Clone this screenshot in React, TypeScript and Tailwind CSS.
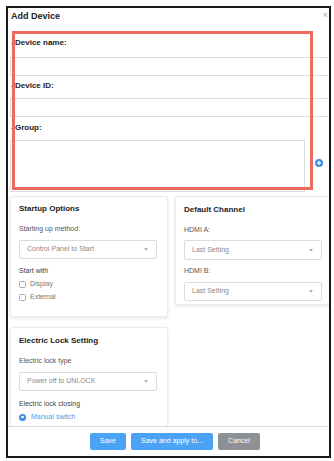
import React from "react";

const font = { fontFamily: '"Liberation Sans", Arial, sans-serif' };

function Select({ text, h = "h-[19px]", mt }: { text: string; h?: string; mt: string }) {
  return (
    <div className={`${mt} ${h} w-[138px] border border-[#dcdcdc] rounded-[2px] flex items-center justify-between pl-[7px] pr-[8px] shrink-0`}>
      <span className="text-[7px] text-[#8a8a8a]">{text}</span>
      <span className="w-0 h-0 border-l-[2.5px] border-r-[2.5px] border-t-[3px] border-l-transparent border-r-transparent border-t-[#b5b5b5]" />
    </div>
  );
}

function Label({ text, mt, bold = false }: { text: string; mt: string; bold?: boolean }) {
  return (
    <div
      className={`${mt} h-[10px] leading-[10px] shrink-0 ${
        bold ? "text-[8px] font-bold text-[#222]" : "text-[7px] text-[#555]"
      }`}
    >
      {text}
    </div>
  );
}

function FieldLabel({ text, mt }: { text: string; mt: string }) {
  return (
    <div className={`${mt} h-[12px] flex items-center pl-[3px] shrink-0`}>
      <span className="w-[2px] h-[1px] bg-[#999]" />
      <span className="ml-[2px] text-[8px] font-bold text-[#222] leading-[12px]">{text}</span>
    </div>
  );
}

export default function App() {
  return (
    <div className="bg-white w-[334px] h-[461px] pt-[6px] pl-[6px]" style={font}>
      <div className="relative w-[325px] h-[452px] border-2 border-[#1a1a1a] flex flex-col overflow-hidden bg-white">
        {/* header */}
        <div className="h-[17px] shrink-0 flex items-center pl-[3px]">
          <span className="text-[9px] font-bold text-[#222]">Add Device</span>
        </div>
        <span className="absolute right-[1px] top-[2px] text-[9px] text-[#aaa] leading-[10px]">×</span>

        {/* body */}
        <div className="flex-1 overflow-hidden flex flex-col">
          <FieldLabel text="Device name:" mt="mt-[12px]" />
          <div className="mt-[8px] h-[19px] ml-[2px] -mr-[3px] border border-[#dedede] shrink-0" />
          <FieldLabel text="Device ID:" mt="mt-[4px]" />
          <div className="mt-[6px] h-[19px] ml-[2px] -mr-[3px] border border-[#dedede] shrink-0" />
          <FieldLabel text="Group:" mt="mt-[5px]" />
          <div className="mt-[6px] flex items-center ml-[2px] shrink-0">
            <div className="w-[295px] h-[52px] border border-[#dedede]" />
            <svg className="ml-[10px] -mt-[6px]" width="8" height="8" viewBox="0 0 8 8">
              <circle cx="4" cy="4" r="4" fill="#3d8fe0" />
              <rect x="1.8" y="3.4" width="4.4" height="1.2" fill="#fff" />
              <rect x="3.4" y="1.8" width="1.2" height="4.4" fill="#fff" />
            </svg>
          </div>

          {/* cards */}
          <div className="mt-[4px] ml-[2px] grid grid-cols-[158px_158px] gap-x-[7px] items-start shrink-0">
            <div className="flex flex-col gap-[10px]">
              <div className="h-[121px] border border-[#ececec] rounded-[2px] shadow-[0_1px_3px_rgba(0,0,0,0.12)] pl-[8px] pt-[7px] flex flex-col">
                <Label text="Startup Options" mt="" bold />
                <Label text="Starting up method:" mt="mt-[10px]" />
                <Select text="Control Panel to Start" mt="mt-[6px]" />
                <div className="mt-[7px] h-[10px] leading-[10px] text-[7px] text-[#444] shrink-0">Start with</div>
                <div className="mt-[3px] h-[10px] flex items-center shrink-0">
                  <span className="w-[7px] h-[7px] border border-[#aaa] rounded-[1.5px]" />
                  <span className="ml-[4px] text-[7px] text-[#777]">Display</span>
                </div>
                <div className="mt-[3px] h-[10px] flex items-center shrink-0">
                  <span className="w-[7px] h-[7px] border border-[#aaa] rounded-[1.5px]" />
                  <span className="ml-[4px] text-[7px] text-[#777]">External</span>
                </div>
              </div>
              <div className="h-[120px] border border-[#ececec] rounded-[2px] shadow-[0_1px_3px_rgba(0,0,0,0.12)] pl-[8px] pt-[8px] flex flex-col">
                <Label text="Electric Lock Setting" mt="" bold />
                <Label text="Electric lock type" mt="mt-[10px]" />
                <Select text="Power off to UNLOCK" mt="mt-[6px]" />
                <div className="mt-[8px] h-[10px] leading-[10px] text-[7px] text-[#444] shrink-0">Electric lock closing</div>
                <div className="mt-[3px] h-[10px] flex items-center shrink-0">
                  <span className="w-[7px] h-[7px] rounded-full bg-[#3d8fe0] flex items-center justify-center">
                    <span className="w-[2.5px] h-[2.5px] rounded-full bg-white" />
                  </span>
                  <span className="ml-[5px] text-[7px] text-[#4d9be6]">Manual switch</span>
                </div>
              </div>
            </div>
            <div className="h-[109px] border border-[#ececec] rounded-[2px] shadow-[0_1px_3px_rgba(0,0,0,0.12)] pl-[8px] pt-[8px] flex flex-col">
              <Label text="Default Channel" mt="" bold />
              <Label text="HDMI A:" mt="mt-[10px]" />
              <Select text="Last Setting" h="h-[20px]" mt="mt-[5px]" />
              <Label text="HDMI B:" mt="mt-[6px]" />
              <Select text="Last Setting" mt="mt-[6px]" />
            </div>
          </div>
        </div>

        {/* footer */}
        <div className="h-[30px] shrink-0 border-t border-[#dcdcdc] flex items-start justify-center pt-[6px] pl-[13px] gap-[5px]">
          <button className="w-[36px] h-[17px] rounded-[2px] bg-[#4ba3f5] text-white text-[7px]">Save</button>
          <button className="w-[82px] h-[17px] rounded-[2px] bg-[#4ba3f5] text-white text-[7px]">Save and apply to...</button>
          <button className="w-[42px] h-[17px] rounded-[2px] bg-[#8d9095] text-white text-[7px]">Cancel</button>
        </div>

        {/* annotation overlay */}
        <div className="absolute left-[4px] top-[23px] w-[301px] h-[159px] border-[3px] border-[#ec6b5e] pointer-events-none z-10" />
      </div>
    </div>
  );
}
